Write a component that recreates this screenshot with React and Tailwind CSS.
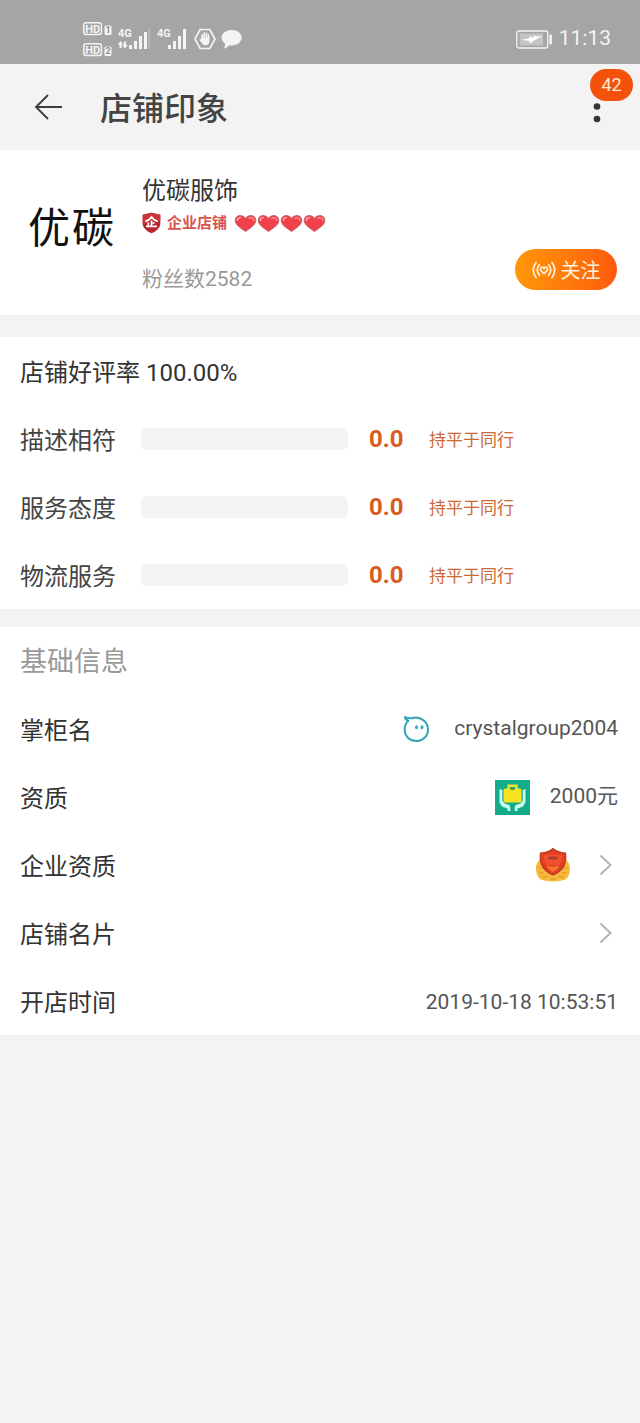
import React, { useState } from 'react';

const ratings = [
  { id: 'desc', label: '描述相符', score: 0, note: '持平于同行' },
  { id: 'attitude', label: '服务态度', score: 0, note: '持平于同行' },
  { id: 'logistics', label: '物流服务', score: 0, note: '持平于同行' },
];

const HdIcon = () => (
  <svg className="w-[29px] h-[36px]" viewBox="0 0 29 36" fill="none">
    {[1, 2].map((n) => (
      <g key={n} transform={n === 1 ? 'translate(0 1)' : 'translate(0 22)'}>
        <rect x="0.8" y="0.8" width="17.6" height="11.6" rx="2.5" stroke="#f4f4f4" strokeWidth="1.5" />
        <text x="9.6" y="10.6" textAnchor="middle" fontSize="11" fontWeight="700" fill="#f4f4f4">HD</text>
        <rect x="21.5" y="3.5" width="7" height="9.5" rx="1.5" fill="#f4f4f4" />
        <text x="25" y="11.4" textAnchor="middle" fontSize="9" fontWeight="700" fill="#8c8c8c">{n}</text>
      </g>
    ))}
  </svg>
);

const SignalIcon = ({ data }) => (
  <svg className="w-[32px] h-[22px]" viewBox="0 0 32 22" fill="#f4f4f4">
    <text x="0" y="9" fontSize="11" fontWeight="700">4G</text>
    {data && <path d="M2.5 13L5.2 16.500H3.600V20H1.400V16.500H-0.200zM7 20.500L4.300 17H5.900V13.500H8.100V17H9.700z" />}
    <rect x="11" y="17" width="3" height="4" />
    <rect x="16" y="13" width="3" height="8" />
    <rect x="21" y="8" width="3" height="13" />
    <rect x="26" y={data ? 4 : 1} width="3" height={data ? 17 : 20} />
    {data && <rect x="30.5" y="1" width="1.5" height="20" opacity="0.25" />}
  </svg>
);

const HandIcon = () => (
  <svg className="w-[22px] h-[22px]" viewBox="0 0 22 22" fill="none">
    <path d="M6.2 1.5H15.8L21 11L15.8 20.5H6.2L1 11z" stroke="#f4f4f4" strokeWidth="1.6" strokeLinejoin="round" />
    <path d="M8 11V6.8M10.2 10.5V5.2M12.4 10.5V5.4M14.5 11V7" stroke="#f4f4f4" strokeWidth="1.7" strokeLinecap="round" />
    <path d="M7.2 10H15.3V13.5C15.3 16 13.6 17.3 11.6 17.3C9.4 17.3 8.5 16.4 7.5 14.8L5.3 11.8C5.6 10.8 6.6 11 7.2 11.8z" fill="#f4f4f4" />
  </svg>
);

const BubbleIcon = () => (
  <svg className="w-[21px] h-[20px]" viewBox="0 0 21 20" fill="#f4f4f4">
    <path d="M10.8 1C16.5 1 20.6 4.2 20.6 8.6C20.6 13 16.3 16.6 10.8 16.6C9.8 16.6 8.8 16.5 8 16.300C6.8 18.300 5 19.400 2.600 19.600C4 18.200 4.4 16.400 4.1 14.700C1.9 13.200 0.6 11 0.6 8.6C0.6 4.2 5.1 1 10.8 1z" />
  </svg>
);

const BatteryIcon = () => (
  <svg className="w-[37px] h-[19px]" viewBox="0 0 37 19" fill="none">
    <rect x="0.8" y="1" width="31" height="17" rx="2" stroke="#f4f4f4" strokeWidth="1.3" />
    <rect x="3.5" y="3.5" width="23.5" height="12" fill="#c4c4c4" />
    <path d="M5.5 9.8L13 8.2L14.500 6L16.500 8L18.5 5.500L20.500 6.500L26.500 6.300L19.500 9.800L17.2 11L14.5 13.8L12.8 11z" fill="#fff" />
    <rect x="33.5" y="4.5" width="2.4" height="10" rx="1" fill="#f4f4f4" />
  </svg>
);

const ShieldIcon = () => (
  <svg className="w-[19px] h-[22px]" viewBox="0 0 19 22" fill="none">
    <path d="M9.5 0.8L18.3 2.8V11.5C18.3 16 14 19.5 9.5 21.3C5 19.5 0.7 16 0.7 11.5V2.8z" fill="#b8262f" />
    <path d="M9.5 0.8L18.3 2.8V9C12 8 6 10 0.7 13V2.8z" fill="#c9353d" />
    <path d="M3.2 9.300C5.500 8.800 8 7.200 9.5 5C11 7.200 13.500 8.800 15.800 9.300M9.5 8.5V14M9.6 11H12.6M6.3 10.5V14M4 14.4H15" stroke="#fff" strokeWidth="1.7" />
  </svg>
);

const HeartIcon = () => (
  <svg className="w-[23px] h-[19px]" viewBox="0 0 23 19">
    <path d="M11.5 17.600C7 14.200 1.200 11 1.200 6.300C1.200 3.400 3.300 1.600 6 1.600C8.4 1.600 10.4 2.500 11.5 4.400C12.6 2.500 14.6 1.600 17 1.600C19.700 1.600 21.800 3.400 21.800 6.300C21.800 11 16 14.200 11.5 17.600z" fill="#f2404a" stroke="#bd6064" strokeWidth="0.9" />
    <path d="M3.4 6.4C3.4 4.6 4.6 3.6 6.4 3.600" stroke="#ffb0b0" strokeWidth="1.4" fill="none" strokeLinecap="round" />
    <path d="M15 4.200C17 3 20 4.200 20 6.500" stroke="#ff8f92" strokeWidth="1.4" fill="none" strokeLinecap="round" />
  </svg>
);

const LiveHeartIcon = () => (
  <svg className="w-[24px] h-[20px]" viewBox="0 0 24 20" fill="none" stroke="#fff2dc" strokeWidth="1.7" strokeLinecap="round">
    <path d="M4 2.5C0.4 7 0.4 13 4 17.5M7.4 4.8C4.8 8 4.8 12 7.4 15.2M20 2.5C23.6 7 23.6 13 20 17.5M16.6 4.8C19.2 8 19.2 12 16.6 15.2" />
    <path d="M12 13.600C10 12 8.400 11 8.400 9.2C8.400 7 11 6.4 12 8.600C13 6.4 15.600 7 15.600 9.2C15.600 11 14 12 12 13.600z" strokeLinejoin="round" />
  </svg>
);

const ChatFaceIcon = () => (
  <svg className="w-[26px] h-[28px]" viewBox="0 0 26 28" fill="none">
    <path d="M5.5 5.8C3.8 5.4 2.3 4 2 2C4 3.2 7 3.4 9.2 3.2C15.5 1 25 5.5 25 14.4C25 21 19.8 26 13.2 26C6.6 26 1.6 21 1.6 14.6C1.6 11 3 7.8 5.5 5.8z" stroke="#35a3b8" strokeWidth="2" strokeLinejoin="round" />
    <ellipse cx="13.5" cy="12.3" rx="1.4" ry="2" fill="#35a3b8" />
    <ellipse cx="19" cy="12.3" rx="1.4" ry="2" fill="#35a3b8" />
  </svg>
);

const DepositIcon = () => (
  <svg className="w-[35px] h-[35px]" viewBox="0 0 35 35" fill="none">
    <rect width="35" height="35" fill="#14ab89" />
    <path d="M13.5 9V5.8H21.5V9" stroke="#e8e52a" strokeWidth="2.4" />
    <rect x="8.5" y="8.5" width="18" height="14" rx="1.5" fill="#f7e320" />
    <rect x="15.5" y="8" width="4" height="2" fill="#3f9a4d" />
    <path d="M4.500 9L7.3 10V20.500L9.500 23.500L14 25C15.300 26.3 15.5 28 15.3 31H12.500V28.500L7 26.500L4.500 22.500zM30.500 9L27.7 10V20.500L25.500 23.500L21 25C19.700 26.3 19.5 28 19.7 31H22.500V28.500L28 26.500L30.500 22.500z" fill="#c8fff0" />
  </svg>
);

const EmblemIcon = () => (
  <svg className="w-[36px] h-[36px]" viewBox="0 0 36 36">
    <path d="M6 12C2.500 14 0.500 18 1 22.500C1.200 27 3 30.500 5.500 32.500C13 35 23 35 30.500 32.500C33 30.500 34.800 27 35 22.500C35.400 18 33 14 30 12z" fill="#f6bb3a" />
    <path d="M3.500 20L7 22M4 25.500L9 26M7 30L13 29.500M32.500 20L29 22M32 25.500L27 26M29 30L23 29.500M15 32H21" stroke="#e5a02c" strokeWidth="1.4" />
    <path d="M18 1.500C21 4.500 26 5.800 30.500 6C32 16 28.500 23.500 18 28C7.500 23.500 4 16 5.500 6C10 5.800 15 4.500 18 1.500z" fill="#e63c20" stroke="#b83a22" strokeWidth="1.200" />
    <path d="M8.500 8C14 7.500 22 7.500 27.500 8C27.500 12 26 16 24 18H12C10 16 8.500 12 8.500 8z" fill="#f04f30" />
    <path d="M13 12.500V10.500L15.500 9.500H20.500L23 10.500V12.500z" fill="#a9402f" />
    <path d="M11.500 18.500C16 20 20 20 24.500 18.500C23.500 21.500 21 23.500 18 25C15 23.500 12.500 21.500 11.500 18.500z" fill="#f3762f" />
  </svg>
);

const Chevron = () => (
  <svg className="w-[13px] h-[22px] mr-[6px]" viewBox="0 0 13 22" fill="none">
    <path d="M1.500 1.500L11.500 11L1.500 20.500" stroke="#b4b4b4" strokeWidth="2" />
  </svg>
);

const InfoRow = ({ label, children, href }) => {
  const content = (
    <>
      <span className="pt-[3px] text-[24px] text-[#333]">{label}</span>
      <span className="flex items-center text-[21px] text-[#555]">{children}</span>
    </>
  );
  const rowClass = 'flex h-[68px] items-center justify-between pl-5 pr-[22px]';

  return (
    <li>
      {href ? (
        <a href={href} aria-label={label} className={rowClass}>{content}</a>
      ) : (
        <div className={rowClass}>{content}</div>
      )}
    </li>
  );
};

export default function App() {
  const [followed, setFollowed] = useState(false);

  return (
    <div className="min-h-screen bg-[#f3f3f3] font-[Roboto,'Noto_Sans_CJK_SC',sans-serif] text-[#333]">
      <div className="flex h-16 items-center justify-between bg-[#a5a5a5] pl-[83px] pr-[29px] pt-[14px]">
        <div className="flex items-center">
          <HdIcon />
          <div className="ml-[6px] flex gap-[7px]">
            <SignalIcon data />
            <SignalIcon />
          </div>
          <div className="ml-[5px] flex items-center gap-[5px]">
            <HandIcon />
            <BubbleIcon />
          </div>
        </div>
        <div className="flex items-center gap-[6px]">
          <BatteryIcon />
          <span className="text-[21px] text-[#f4f4f4]">11:13</span>
        </div>
      </div>

      <header className="relative flex h-[86px] items-center pl-[34px] pr-7">
        <button type="button" aria-label="返回" className="mr-[38px]">
          <svg className="w-[28px] h-[26px]" viewBox="0 0 28 26" fill="none">
            <path d="M28 13H2M14 1L2 13L14 25" stroke="#3c3c3c" strokeWidth="1.800" />
          </svg>
        </button>
        <h1 className="pt-1 text-[32px] font-medium text-[#444]">店铺印象</h1>
        <button type="button" aria-label="更多" className="ml-auto mr-[11px]">
          <svg className="w-[8px] h-[32px]" viewBox="0 0 8 32" fill="#34343c">
            <circle cx="4" cy="15.500" r="3.300" />
            <circle cx="4" cy="28" r="3.300" />
          </svg>
        </button>
        <span className="absolute right-[7px] top-[5px] flex h-8 w-[43px] items-center justify-center rounded-full bg-[#f4520b] text-lg text-[#ffe9d2]">
          42
        </span>
      </header>

      <main>
        <section className="flex bg-white pb-[21px] pl-7 pr-[23px] pt-[21px]">
          <div className="mr-[28px] flex w-[86px] items-center justify-between pb-2 text-[42px] leading-none text-[#111]">
            <span>优</span>
            <span>碳</span>
          </div>
          <div>
            <h2 className="flex h-9 items-center pt-[3px] text-[24px]">优碳服饰</h2>
            <div className="flex h-8 items-center">
              <ShieldIcon />
              <span className="ml-[6px] mr-[7px] text-[15px] font-bold text-[#d9534c]">企业店铺</span>
              <HeartIcon />
              <HeartIcon />
              <HeartIcon />
              <HeartIcon />
            </div>
            <p className="mt-[23px] flex h-8 items-center pt-[3px] text-[21px] text-[#999]">粉丝数2582</p>
          </div>
          <button
            type="button"
            aria-pressed={followed}
            onClick={() => setFollowed(!followed)}
            className="mb-1 ml-auto flex h-[41px] w-[102px] items-center justify-center gap-[5px] self-end rounded-full bg-linear-to-r from-[#ff9709] to-[#fd5a0d] text-[20px] text-[#fff2dc]"
          >
            <LiveHeartIcon />
            <span className="pt-[2px]">{followed ? '已关注' : '关注'}</span>
          </button>
        </section>

        <section className="mt-[22px] bg-white">
          <h2 className="flex h-[68px] items-center pl-5 pt-[3px] text-[24px]">店铺好评率 100.00%</h2>
          <ul>
            {ratings.map((item) => (
              <li key={item.id} className="flex h-[68px] items-center pl-5">
                <span className="w-[121px] pt-[3px] text-[24px] text-[#444]">{item.label}</span>
                <div className="h-[22px] w-[207px] overflow-hidden rounded-md bg-[#f3f3f3]">
                  <div className="h-full bg-[#e55a1c]" style={{ width: `${item.score * 20}%` }} />
                </div>
                <span className="ml-[21px] w-[60px] text-[24px] font-bold text-[#d85c20]">{item.score.toFixed(1)}</span>
                <span className="pt-[3px] text-[17px] text-[#cc6a35]">{item.note}</span>
              </li>
            ))}
          </ul>
        </section>

        <section className="mt-[18px] bg-white">
          <h2 className="flex h-[68px] items-center pl-5 pt-[3px] text-[27px] text-[#999]">基础信息</h2>
          <ul>
            <InfoRow label="掌柜名">
              <ChatFaceIcon />
              <span className="ml-[25px]">crystalgroup2004</span>
            </InfoRow>
            <InfoRow label="资质">
              <DepositIcon />
              <span className="ml-5">2000元</span>
            </InfoRow>
            <InfoRow label="企业资质" href="#license">
              <span className="mr-[28px]">
                <EmblemIcon />
              </span>
              <Chevron />
            </InfoRow>
            <InfoRow label="店铺名片" href="#card">
              <Chevron />
            </InfoRow>
            <InfoRow label="开店时间">
              <time dateTime="2019-10-18T10:53:51" className="pt-[3px]">2019-10-18 10:53:51</time>
            </InfoRow>
          </ul>
        </section>
      </main>
    </div>
  );
}
